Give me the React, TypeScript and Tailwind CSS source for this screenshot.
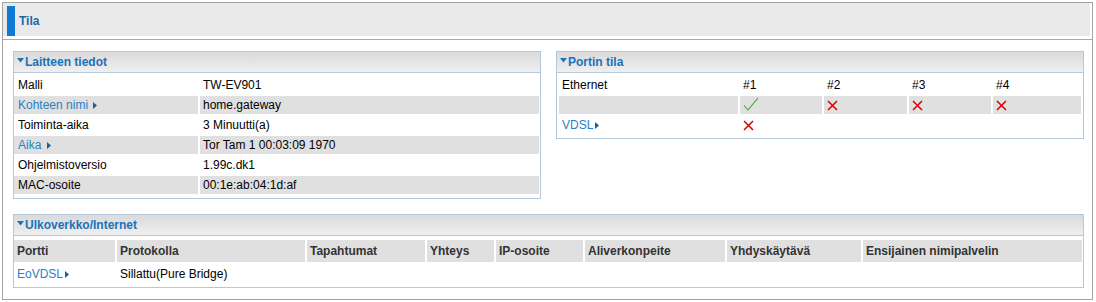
import React from 'react';

const blue = 'text-[#1a72bb]';

const DownTri = () => (
  <svg width="7" height="5" viewBox="0 0 7 5" className="shrink-0 -mt-[3px] mr-px">
    <path d="M0 0H7L3.5 4.5Z" fill="#1a72bb" />
  </svg>
);

const RightTri = () => (
  <svg width="4" height="7" viewBox="0 0 4 7" className="shrink-0 ml-[2px] mt-px">
    <path d="M0 0L4 3.5L0 7Z" fill="#1d5f9c" />
  </svg>
);

const Check = () => (
  <svg width="16" height="15" viewBox="0 0 16 15" className="-mt-[2px]">
    <path d="M1 8.5L5 13L15 1" fill="none" stroke="#3aa43a" strokeWidth="1.1" />
  </svg>
);

const Cross = () => (
  <svg width="11" height="11" viewBox="0 0 11 11" className="mt-px">
    <path d="M1 1L10 10M10 1L1 10" fill="none" stroke="#d90000" strokeWidth="1.5" />
  </svg>
);

const LinkText = ({ text }: { text: string }) => (
  <span className="flex items-center text-[#2a80c6]">
    <span className="whitespace-pre">{text}</span>
    <RightTri />
  </span>
);

const Panel = ({ title, children }: { title: string; children: React.ReactNode }) => (
  <div className="border border-[#b5c7d9] bg-white">
    <div className="h-[21px] border-b border-[#b5c7d9] bg-gradient-to-b from-[#dadada] to-[#efefef] flex items-center pl-[3px] font-bold">
      <DownTri />
      <span className={blue}>{title}</span>
    </div>
    {children}
  </div>
);

const info = [
  { label: 'Malli', value: 'TW-EV901' },
  { label: 'Kohteen nimi ', value: 'home.gateway', link: true },
  { label: 'Toiminta-aika', value: '3 Minuutti(a)' },
  { label: 'Aika ', value: 'Tor Tam 1 00:03:09 1970', link: true },
  { label: 'Ohjelmistoversio', value: '1.99c.dk1' },
  { label: 'MAC-osoite', value: '00:1e:ab:04:1d:af' },
];

const wanCols = ['Portti', 'Protokolla', 'Tapahtumat', 'Yhteys', 'IP-osoite', 'Aliverkonpeite', 'Yhdyskäytävä', 'Ensijainen nimipalvelin'];

export default function App() {
  return (
    <div className="w-[1096px] h-[302px] bg-white pl-[2px] pt-[2px] font-['Liberation_Sans',Arial,sans-serif] text-[12px] text-black">
      <div className="w-[1091px] h-[298px] border border-[#a3a3a3] flex flex-col">
        {/* title */}
        <div className="mr-[2px] h-[33px] bg-[#e9e9e9] flex pt-[3px] pl-[4px]">
          <div className="w-[8px] bg-[#0f7ad6]" />
          <span className="ml-[4px] self-center font-bold text-[#1b68a6]">Tila</span>
        </div>
        <div className="mt-[3px] h-px bg-[#a9a9a9]" />

        <div className="pl-[10px] pr-[8px] pt-[11px]">
          <div className="flex items-start gap-[15px]">
            <div className="w-[528px]">
              <Panel title="Laitteen tiedot">
                <div className="flex flex-col gap-[2px] pt-[3px] pb-[4px] pr-[1px]">
                  {info.map((r, i) => {
                    const bg = i % 2 === 1 ? 'bg-[#e0e0e0]' : '';
                    return (
                      <div key={r.label} className="grid grid-cols-[184px_1fr] gap-x-[2px] h-[18px]">
                        <div className={`flex items-center pl-[4px] ${bg}`}>
                          {r.link ? <LinkText text={r.label} /> : r.label}
                        </div>
                        <div className={`flex items-center pl-[3px] ${bg}`}>{r.value}</div>
                      </div>
                    );
                  })}
                </div>
              </Panel>
            </div>

            <div className="w-[528px]">
              <Panel title="Portin tila">
                <div className="flex flex-col gap-[2px] pt-[3px] pb-[4px] px-[2px]">
                  <div className="grid grid-cols-[179px_82px_83px_82px_1fr] gap-x-[2px] h-[18px]">
                    {['Ethernet', '#1', '#2', '#3', '#4'].map((t) => (
                      <div key={t} className="flex items-center pl-[3px]">{t}</div>
                    ))}
                  </div>
                  <div className="grid grid-cols-[179px_82px_83px_82px_1fr] gap-x-[2px] h-[18px]">
                    <div className="bg-[#e0e0e0]" />
                    <div className="bg-[#e0e0e0] flex items-center pl-[3px]"><Check /></div>
                    <div className="bg-[#e0e0e0] flex items-center pl-[3px]"><Cross /></div>
                    <div className="bg-[#e0e0e0] flex items-center pl-[3px]"><Cross /></div>
                    <div className="bg-[#e0e0e0] flex items-center pl-[3px]"><Cross /></div>
                  </div>
                  <div className="grid grid-cols-[179px_82px_83px_82px_1fr] gap-x-[2px] h-[18px]">
                    <div className="flex items-center pl-[3px]"><LinkText text="VDSL" /></div>
                    <div className="flex items-center pl-[3px]"><Cross /></div>
                  </div>
                </div>
              </Panel>
            </div>
          </div>

          <div className="mt-[15px]">
            <Panel title="Ulkoverkko/Internet">
              <div className="flex flex-col gap-[2px] pt-[4px] pb-[3px] pr-[1px]">
                <div className="grid grid-cols-[101px_188px_118px_67px_87px_140px_134px_1fr] gap-x-[2px] h-[22px]">
                  {wanCols.map((c) => (
                    <div key={c} className="bg-[#e0e0e0] flex items-center pl-[3px] font-bold text-[#333]">{c}</div>
                  ))}
                </div>
                <div className="grid grid-cols-[101px_188px_118px_67px_87px_140px_134px_1fr] gap-x-[2px] h-[20px]">
                  <div className="flex items-center pl-[3px]"><LinkText text="EoVDSL" /></div>
                  <div className="flex items-center pl-[3px]">Sillattu(Pure Bridge)</div>
                </div>
              </div>
            </Panel>
          </div>
        </div>
      </div>
    </div>
  );
}
